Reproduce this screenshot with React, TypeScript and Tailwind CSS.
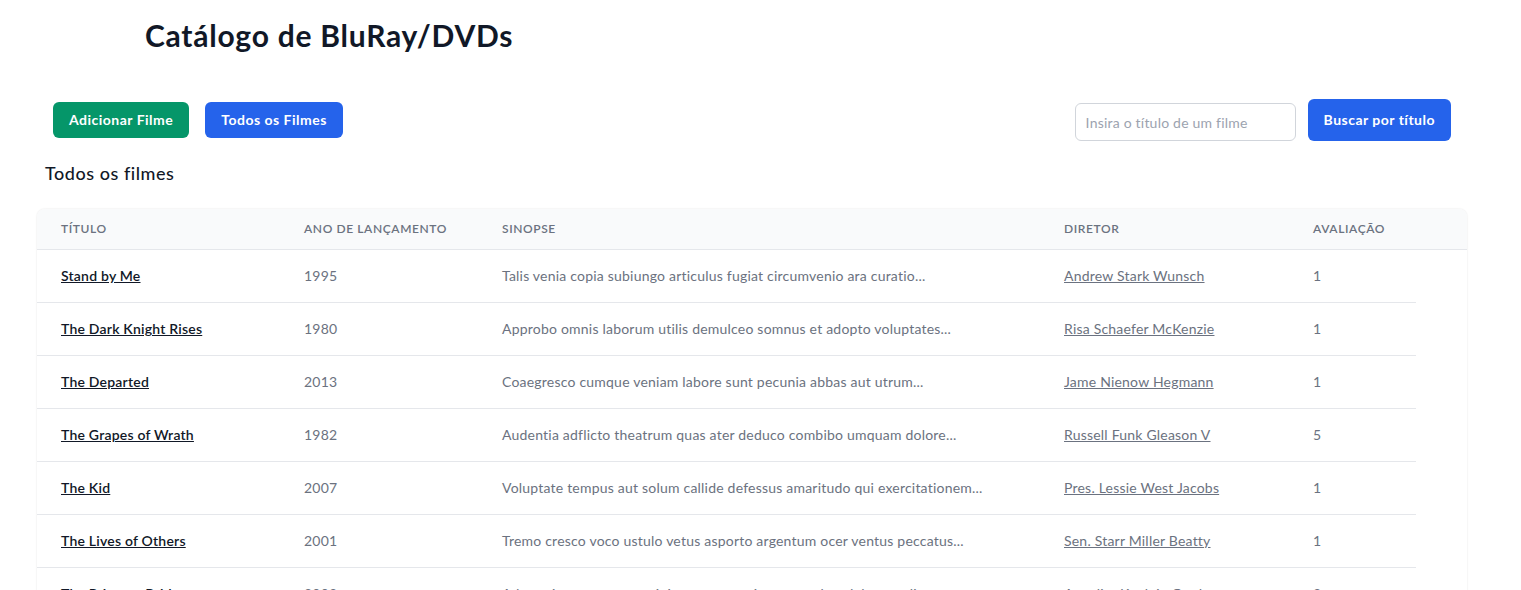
import React from 'react';

interface Movie {
  title: string;
  year: number;
  synopsis: string;
  director: string;
  rating: number;
}

const movies: Movie[] = [
  { title: 'Stand by Me', year: 1995, synopsis: 'Talis venia copia subiungo articulus fugiat circumvenio ara curatio...', director: 'Andrew Stark Wunsch', rating: 1 },
  { title: 'The Dark Knight Rises', year: 1980, synopsis: 'Approbo omnis laborum utilis demulceo somnus et adopto voluptates...', director: 'Risa Schaefer McKenzie', rating: 1 },
  { title: 'The Departed', year: 2013, synopsis: 'Coaegresco cumque veniam labore sunt pecunia abbas aut utrum...', director: 'Jame Nienow Hegmann', rating: 1 },
  { title: 'The Grapes of Wrath', year: 1982, synopsis: 'Audentia adflicto theatrum quas ater deduco combibo umquam dolore...', director: 'Russell Funk Gleason V', rating: 5 },
  { title: 'The Kid', year: 2007, synopsis: 'Voluptate tempus aut solum callide defessus amaritudo qui exercitationem...', director: 'Pres. Lessie West Jacobs', rating: 1 },
  { title: 'The Lives of Others', year: 2001, synopsis: 'Tremo cresco voco ustulo vetus asporto argentum ocer ventus peccatus...', director: 'Sen. Starr Miller Beatty', rating: 1 },
  { title: 'The Princess Bride', year: 2003, synopsis: 'Ademptio cognatus suscipio curo tenus ipsum terebro delectus alias...', director: 'Angelita Koelpin Grady', rating: 3 },
];

const headers = ['Título', 'Ano de lançamento', 'Sinopse', 'Diretor', 'Avaliação'];

export default function App() {
  return (
    <div className="min-h-screen bg-white text-[#111827]" style={{ fontFamily: 'Lato, "Noto Sans", sans-serif' }}>
      <h1 className="pt-[17px] pl-[145px] text-3xl font-bold leading-9 tracking-[0.025em] text-[#111827]">
        Catálogo de BluRay/DVDs
      </h1>

      <div className="ml-[37px] w-[1430px]">
        {/* Toolbar */}
        <div className="mt-[46px] flex items-center justify-between px-4">
          <div className="flex items-center gap-4">
            <button className="h-9 rounded-md bg-[#059669] px-4 text-sm font-bold tracking-[0.035em] text-white">
              Adicionar Filme
            </button>
            <button className="h-9 rounded-md bg-[#2563eb] px-4 text-sm font-bold tracking-[0.035em] text-white">
              Todos os Filmes
            </button>
          </div>
          <div className="flex items-center gap-3">
            <input
              className="mt-1 h-[38px] w-[221px] rounded-md border border-[#d1d5db] px-2.5 text-sm tracking-[0.015em] text-gray-700 placeholder:text-[#9ca3af]"
              placeholder="Insira o título de um filme"
            />
            <button className="h-[42px] rounded-md bg-[#2563eb] px-4 text-sm font-bold tracking-[0.035em] text-white">
              Buscar por título
            </button>
          </div>
        </div>

        <h2 className="mt-[18px] pl-2 text-lg font-medium leading-7 tracking-[0.03em] text-[#111827]">Todos os filmes</h2>

        {/* Table */}
        <div className="mt-[22px] overflow-hidden rounded-lg bg-white shadow-[0_0_2px_rgba(0,0,0,0.12)]">
          <div className="grid h-[41px] grid-cols-[243px_198px_562px_249px_1fr] items-center border-b border-[#e5e7eb] bg-[#f9fafb]">
            {headers.map((h) => (
              <div key={h} className="px-6 text-xs font-semibold uppercase tracking-wider text-[#6b7280]">
                {h}
              </div>
            ))}
          </div>
          <div className="w-[1379px]">
            {movies.map((m) => (
              <div
                key={m.title}
                className="grid h-[53px] grid-cols-[243px_198px_562px_249px_127px] items-center border-b border-[#e5e7eb] text-sm tracking-[0.015em]"
              >
                <div className="px-6">
                  <a href="#" className="font-semibold text-[#111827] underline">{m.title}</a>
                </div>
                <div className="px-6 text-[#6b7280]">{m.year}</div>
                <div className="px-6 text-[#6b7280]">{m.synopsis}</div>
                <div className="px-6">
                  <a href="#" className="text-[#6b7280] underline">{m.director}</a>
                </div>
                <div className="px-6 text-[#6b7280]">{m.rating}</div>
              </div>
            ))}
          </div>
        </div>
      </div>
    </div>
  );
}
